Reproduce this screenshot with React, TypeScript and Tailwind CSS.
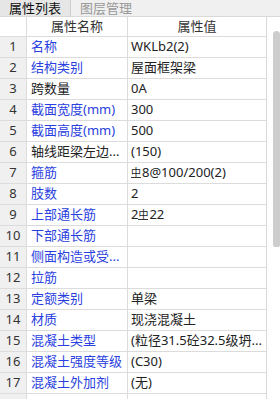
const rows: { name: string; value: React.ReactNode; blue: boolean }[] = [
  { name: "名称", value: "WKLb2(2)", blue: true },
  { name: "结构类别", value: "屋面框架梁", blue: true },
  { name: "跨数量", value: "0A", blue: false },
  { name: "截面宽度(mm)", value: "300", blue: true },
  { name: "截面高度(mm)", value: "500", blue: true },
  { name: "轴线距梁左边...", value: "(150)", blue: false },
  { name: "箍筋", value: <><Rebar />8@100/200(2)</>, blue: true },
  { name: "肢数", value: "2", blue: true },
  { name: "上部通长筋", value: <>2<Rebar />22</>, blue: true },
  { name: "下部通长筋", value: "", blue: true },
  { name: "侧面构造或受...", value: "", blue: true },
  { name: "拉筋", value: "", blue: true },
  { name: "定额类别", value: "单梁", blue: true },
  { name: "材质", value: "现浇混凝土", blue: true },
  { name: "混凝土类型", value: "(粒径31.5砼32.5级坍...", blue: true },
  { name: "混凝土强度等级", value: "(C30)", blue: true },
  { name: "混凝土外加剂", value: "(无)", blue: true },
  { name: "", value: "", blue: true },
]

function Rebar() {
  return (
    <span className="inline-block text-[10px] leading-[9px] border-b border-[#333] align-[3px] mr-px">中</span>
  )
}

export default function App() {
  return (
    <div
      className="w-[280px] h-[399px] overflow-hidden bg-white text-[13px] text-[#222] flex flex-col"
      style={{ fontFamily: '"Segoe UI", "Noto Sans", "Noto Sans CJK SC", sans-serif' }}
    >
      {/* tabs */}
      <div className="h-[17px] flex bg-[#f0f0f0] border-b border-[#d9d9d9] shrink-0">
        <div className="w-[71px] bg-[#e6e6e6] border-r border-[#cfcfcf] flex items-start justify-center text-[13px] leading-[16px] text-[#111]">
          属性列表
        </div>
        <div className="w-[70px] flex items-start justify-center text-[13px] leading-[16px] text-[#999]">
          图层管理
        </div>
      </div>

      <div className="flex flex-1 min-h-0">
        <div className="w-[267px] border-r border-[#d9d9d9] flex flex-col">
          {/* header */}
          <div className="h-[20px] flex border-b border-[#dcdcdc] shrink-0">
            <div className="w-[27px] border-r border-[#dcdcdc]" />
            <div className="w-[101px] border-r border-[#dcdcdc] flex items-center justify-center text-[#333]">属性名称</div>
            <div className="flex-1 flex items-center justify-center text-[#333]">属性值</div>
          </div>
          {rows.map((r, i) => (
            <div key={i} className="h-[21px] flex border-b border-[#dcdcdc] shrink-0">
              <div className="w-[27px] bg-[#f0f0f0] border-r border-[#dcdcdc] flex items-center justify-center text-[#333]">
                {r.name ? i + 1 : ""}
              </div>
              <div
                className={
                  "w-[101px] border-r border-[#dcdcdc] flex items-center pl-[4px] whitespace-nowrap overflow-hidden " +
                  (r.blue ? "text-[#2a3fe0]" : "text-[#222]")
                }
              >
                {r.name}
              </div>
              <div className="flex-1 flex items-center pl-[3px] whitespace-nowrap overflow-hidden">{r.value}</div>
            </div>
          ))}
        </div>
        {/* scrollbar */}
        <div className="flex-1 pl-[6px] pt-[14px]">
          <div className="h-[216px] bg-[#cdcdcd] rounded-t-[4px] rounded-b-[3px]" />
        </div>
      </div>
    </div>
  )
}
